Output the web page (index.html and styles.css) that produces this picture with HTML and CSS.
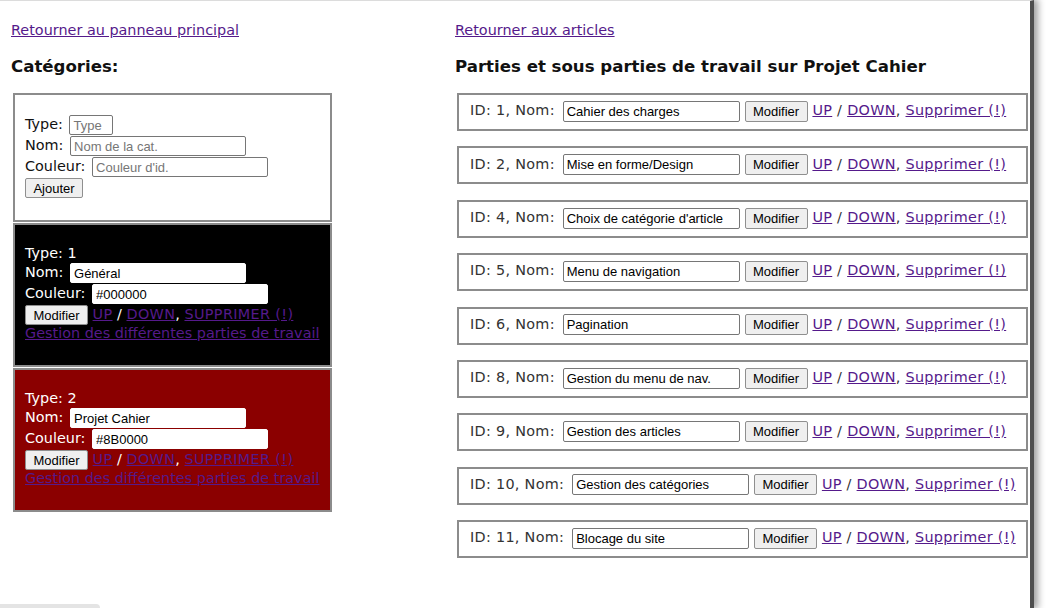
FILE: index.html
```html
<!DOCTYPE html>
<html lang="fr">
<head>
<meta charset="utf-8">
<title>Catégories</title>
<link rel="stylesheet" href="styles.css">
</head>
<body>
<div class="window">
  <div class="page">
    <div class="left">
      <a class="navlink" href="#">Retourner au panneau principal</a>
      <h2 class="title">Catégories:</h2>
      <div class="cats">
        <div class="cat cat-new">
          <div class="line">Type: <input class="in in-type" type="text" placeholder="Type"></div>
          <div class="line">Nom: <input class="in" type="text" placeholder="Nom de la cat."></div>
          <div class="line">Couleur: <input class="in" type="text" placeholder="Couleur d'id."></div>
          <div class="line"><button class="btn btn-add">Ajouter</button></div>
        </div>
        <div class="cat cat-dark cat-black">
          <div class="line text">Type: 1</div>
          <div class="line">Nom: <input class="in" type="text" value="Général"></div>
          <div class="line">Couleur: <input class="in" type="text" value="#000000"></div>
          <div class="line actions"><button class="btn">Modifier</button> <a href="#">UP</a> / <a href="#">DOWN</a>, <a href="#">SUPPRIMER (!)</a></div>
          <div class="line text"><a href="#">Gestion des différentes parties de travail</a></div>
        </div>
        <div class="cat cat-dark cat-red">
          <div class="line text">Type: 2</div>
          <div class="line">Nom: <input class="in" type="text" value="Projet Cahier"></div>
          <div class="line">Couleur: <input class="in" type="text" value="#8B0000"></div>
          <div class="line actions"><button class="btn">Modifier</button> <a href="#">UP</a> / <a href="#">DOWN</a>, <a href="#">SUPPRIMER (!)</a></div>
          <div class="line text"><a href="#">Gestion des différentes parties de travail</a></div>
        </div>
      </div>
    </div>
    <div class="right">
      <a class="navlink" href="#">Retourner aux articles</a>
      <h2 class="title">Parties et sous parties de travail sur Projet Cahier</h2>
      <div class="parts">
        <div class="part"><span class="row">ID: 1, Nom: <input class="in" type="text" value="Cahier des charges"> <button class="btn">Modifier</button> <a href="#">UP</a> / <a href="#">DOWN</a>, <a href="#">Supprimer (!)</a></span></div>
        <div class="part"><span class="row">ID: 2, Nom: <input class="in" type="text" value="Mise en forme/Design"> <button class="btn">Modifier</button> <a href="#">UP</a> / <a href="#">DOWN</a>, <a href="#">Supprimer (!)</a></span></div>
        <div class="part"><span class="row">ID: 4, Nom: <input class="in" type="text" value="Choix de catégorie d'article"> <button class="btn">Modifier</button> <a href="#">UP</a> / <a href="#">DOWN</a>, <a href="#">Supprimer (!)</a></span></div>
        <div class="part"><span class="row">ID: 5, Nom: <input class="in" type="text" value="Menu de navigation"> <button class="btn">Modifier</button> <a href="#">UP</a> / <a href="#">DOWN</a>, <a href="#">Supprimer (!)</a></span></div>
        <div class="part"><span class="row">ID: 6, Nom: <input class="in" type="text" value="Pagination"> <button class="btn">Modifier</button> <a href="#">UP</a> / <a href="#">DOWN</a>, <a href="#">Supprimer (!)</a></span></div>
        <div class="part"><span class="row">ID: 8, Nom: <input class="in" type="text" value="Gestion du menu de nav."> <button class="btn">Modifier</button> <a href="#">UP</a> / <a href="#">DOWN</a>, <a href="#">Supprimer (!)</a></span></div>
        <div class="part"><span class="row">ID: 9, Nom: <input class="in" type="text" value="Gestion des articles"> <button class="btn">Modifier</button> <a href="#">UP</a> / <a href="#">DOWN</a>, <a href="#">Supprimer (!)</a></span></div>
        <div class="part"><span class="row">ID: 10, Nom: <input class="in" type="text" value="Gestion des catégories"> <button class="btn">Modifier</button> <a href="#">UP</a> / <a href="#">DOWN</a>, <a href="#">Supprimer (!)</a></span></div>
        <div class="part"><span class="row">ID: 11, Nom: <input class="in" type="text" value="Blocage du site"> <button class="btn">Modifier</button> <a href="#">UP</a> / <a href="#">DOWN</a>, <a href="#">Supprimer (!)</a></span></div>
      </div>
    </div>
  </div>
  <div class="corner-tab"></div>
</div>
</body>
</html>
```

FILE: styles.css
```css
html, body {
  margin: 0;
  padding: 0;
  background: #fff;
  overflow: hidden;
}

body {
  font-family: "DejaVu Sans", Verdana, sans-serif;
  font-size: 14.4px;
  color: #111;
}

.window {
  position: relative;
  width: 1034px;
  height: 608px;
  box-sizing: border-box;
  border-top: 1px solid #dcdcdc;
  border-right: 4px solid #4d4d4d;
  box-shadow: 3px 0 7px 1px rgba(0, 0, 0, 0.38);
  background: #fff;
}

.page {
  display: flex;
  padding: 21px 0 0 11px;
}

.left {
  width: 444px;
  flex: none;
}

.right {
  width: 575px;
  flex: none;
}

a {
  color: #551a8b;
  text-decoration: underline;
}

.navlink {
  display: block;
  line-height: 17px;
  height: 17px;
}

.title {
  margin: 18px 0 0;
  font-size: 16.6px;
  line-height: 20px;
  font-weight: bold;
  color: #111;
}

.cats {
  margin: 16px 0 0 2px;
  width: 319px;
  display: flex;
  flex-direction: column;
  gap: 1px;
}

.cat {
  box-sizing: border-box;
  border: 2px solid #8c8c8c;
  padding: 19px 10px 21px;
}

.cat-new {
  height: 129px;
  color: #111;
}

.cat-dark {
  color: #fff;
  padding-top: 20px;
  padding-bottom: 0;
  height: 144px;
}

.cat-black {
  background: #000;
}

.cat-red {
  background: #8b0000;
}

.line {
  height: 21px;
  line-height: 21px;
  white-space: nowrap;
}

.line.text {
  height: 17px;
  line-height: 17px;
}

.actions a {
  letter-spacing: 0.35px;
}

.in {
  box-sizing: border-box;
  width: 176px;
  height: 20px;
  margin: 0;
  padding: 1px 3px;
  border: 1px solid #767676;
  border-radius: 2px;
  background: #fff;
  font-family: "Liberation Sans", Arial, sans-serif;
  font-size: 13px;
  color: #000;
  vertical-align: middle;
}

.cat .in {
  margin-left: 2px;
}

.in::placeholder {
  color: #767676;
}

.in-type {
  width: 44px;
}

.cat-dark .in {
  border-color: #fff;
}

.btn {
  box-sizing: border-box;
  height: 20px;
  margin: 0;
  padding: 0 7px;
  border: 1px solid #8f8f8f;
  border-radius: 2px;
  background: #efefef;
  font-family: "Liberation Sans", Arial, sans-serif;
  font-size: 13px;
  color: #000;
  vertical-align: middle;
}

.btn-add {
  width: 58px;
  padding: 0;
}

.cat-dark .btn {
  width: 63px;
  padding: 0;
}

.parts {
  margin: 16px 0 0 2px;
  display: flex;
  flex-direction: column;
  gap: 15.4px;
}

.part {
  box-sizing: border-box;
  width: 571px;
  height: 38px;
  border: 2px solid #8c8c8c;
  padding: 0 11px 2px;
  display: flex;
  align-items: center;
  color: #333;
  font-size: 14.4px;
  letter-spacing: 0.3px;
}

.row {
  white-space: nowrap;
  line-height: 21px;
}

.part .in {
  height: 21px;
  width: 177px;
  margin-left: 3px;
  letter-spacing: 0;
}

.part .btn {
  height: 21px;
  width: 63px;
  padding: 0;
  letter-spacing: 0;
}

.corner-tab {
  position: absolute;
  left: 0;
  bottom: -1px;
  width: 100px;
  height: 5px;
  background: #e4e4e4;
  border-radius: 0 4px 0 0;
}
```
